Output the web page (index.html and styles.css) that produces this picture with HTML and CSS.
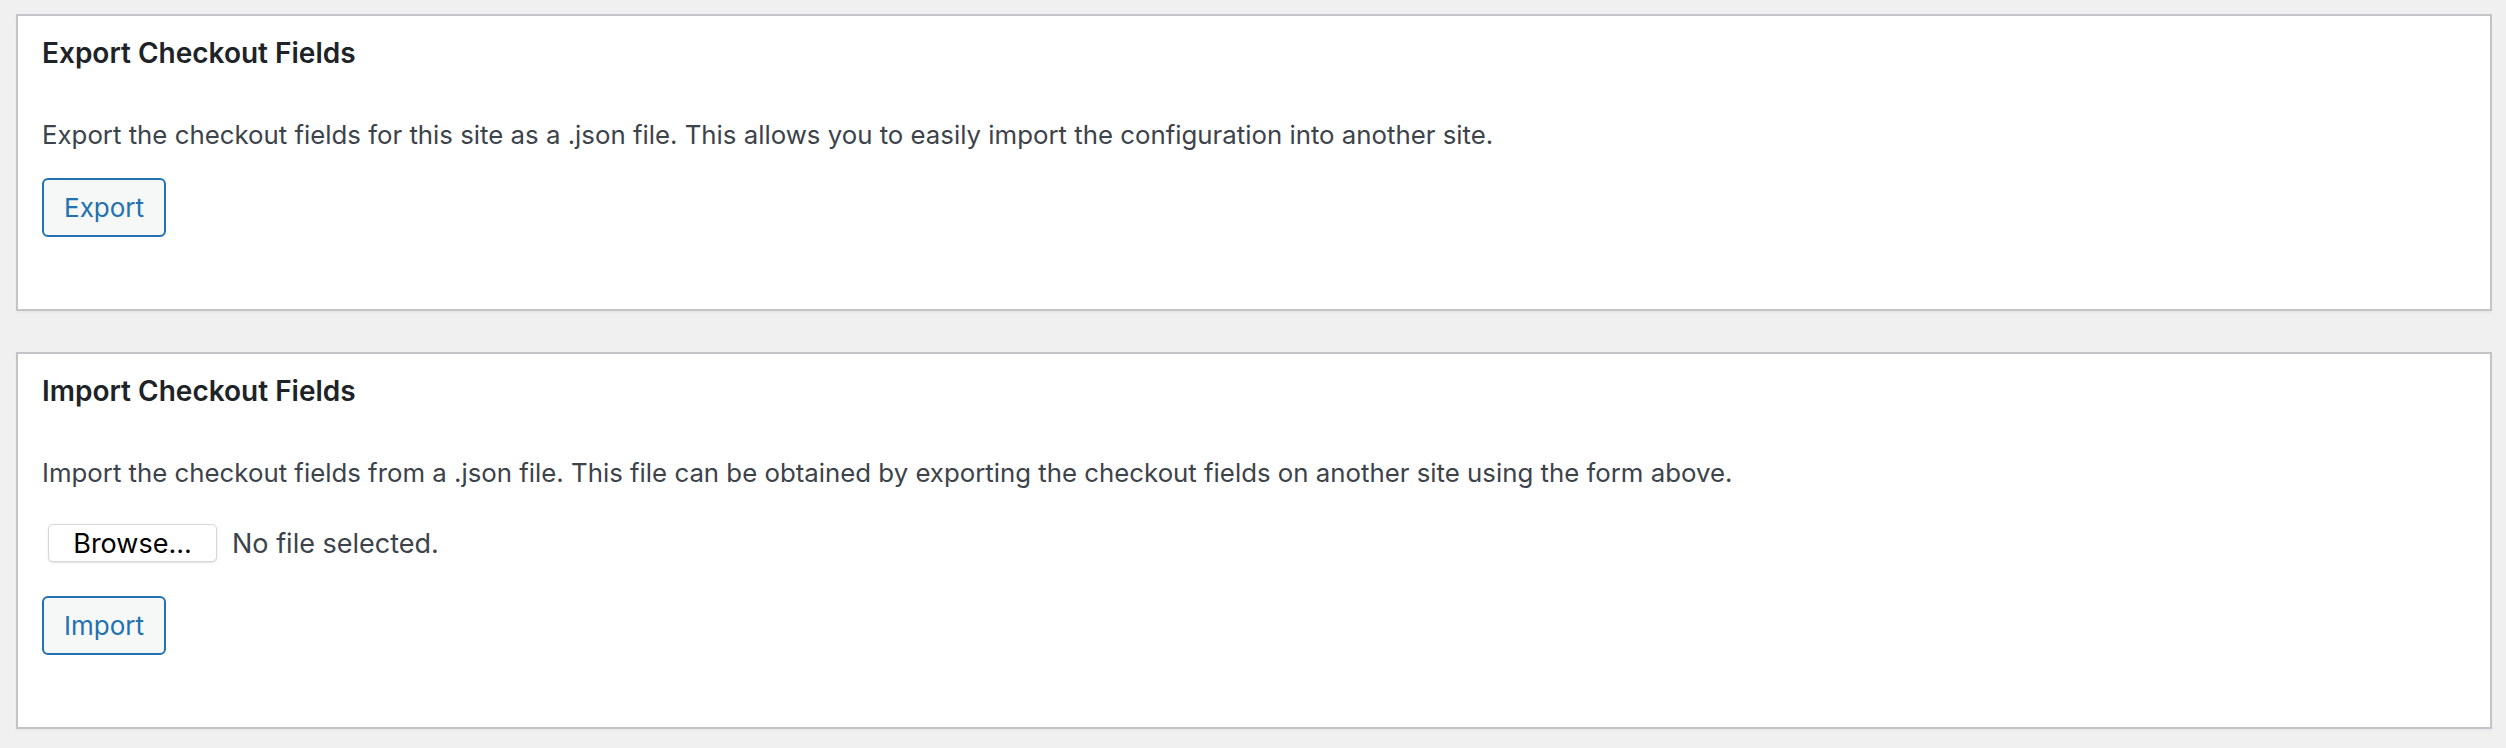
FILE: index.html
```html
<!DOCTYPE html>
<html lang="en">
<head>
<meta charset="utf-8">
<title>Checkout Fields Import / Export</title>
<link rel="stylesheet" href="styles.css">
</head>
<body>
<div class="wrap">
  <section class="postbox">
    <h2 class="box-title">Export Checkout Fields</h2>
    <p class="desc">Export the checkout fields for this site as a .json file. This allows you to easily import the configuration into another site.</p>
    <button class="button" type="button">Export</button>
  </section>
  <section class="postbox">
    <h2 class="box-title">Import Checkout Fields</h2>
    <p class="desc">Import the checkout fields from a .json file. This file can be obtained by exporting the checkout fields on another site using the form above.</p>
    <div class="file-row">
      <span class="browse">Browse...</span>
      <span class="file-status">No file selected.</span>
    </div>
    <button class="button" type="button">Import</button>
  </section>
</div>
</body>
</html>
```

FILE: styles.css
```css
html, body {
  margin: 0;
  padding: 0;
  background: #f0f0f1;
}
body {
  font-family: Inter, "Liberation Sans", sans-serif;
  color: #3c434a;
  height: 748px;
  overflow: hidden;
}
.wrap {
  padding: 14px 14px 0 16px;
  display: flex;
  flex-direction: column;
  gap: 41px;
}
.postbox {
  background: #fff;
  border: 2px solid #c3c4c7;
  box-shadow: 0 2px 2px rgba(0, 0, 0, 0.04);
  padding: 19px 24px 72px;
  display: flex;
  flex-direction: column;
  align-items: flex-start;
}
.box-title {
  margin: 0;
  font-size: 28px;
  font-weight: 600;
  line-height: 36px;
  color: #1d2327;
}
.desc {
  margin: 46px 0 0;
  font-size: 25.8px;
  line-height: 36px;
}
.button {
  margin-top: 25px;
  height: 59px;
  padding: 0 20px;
  font-family: inherit;
  font-size: 26px;
  color: #2271b1;
  background: #f6f7f7;
  border: 2px solid #2271b1;
  border-radius: 6px;
}
.file-row {
  margin-top: 33px;
  display: flex;
  align-items: center;
  gap: 15px;
  padding-left: 6px;
}
.browse {
  width: 169px;
  height: 38px;
  box-sizing: border-box;
  display: flex;
  align-items: center;
  justify-content: center;
  background: #fff;
  border: 1px solid #d6d6d6;
  border-radius: 5px;
  box-shadow: 0 1px 2px rgba(0, 0, 0, 0.12);
  color: #000;
  font-size: 27px;
}
.file-status {
  font-size: 27px;
  color: #3c434a;
}
.file-row + .button {
  margin-top: 34px;
}
```
